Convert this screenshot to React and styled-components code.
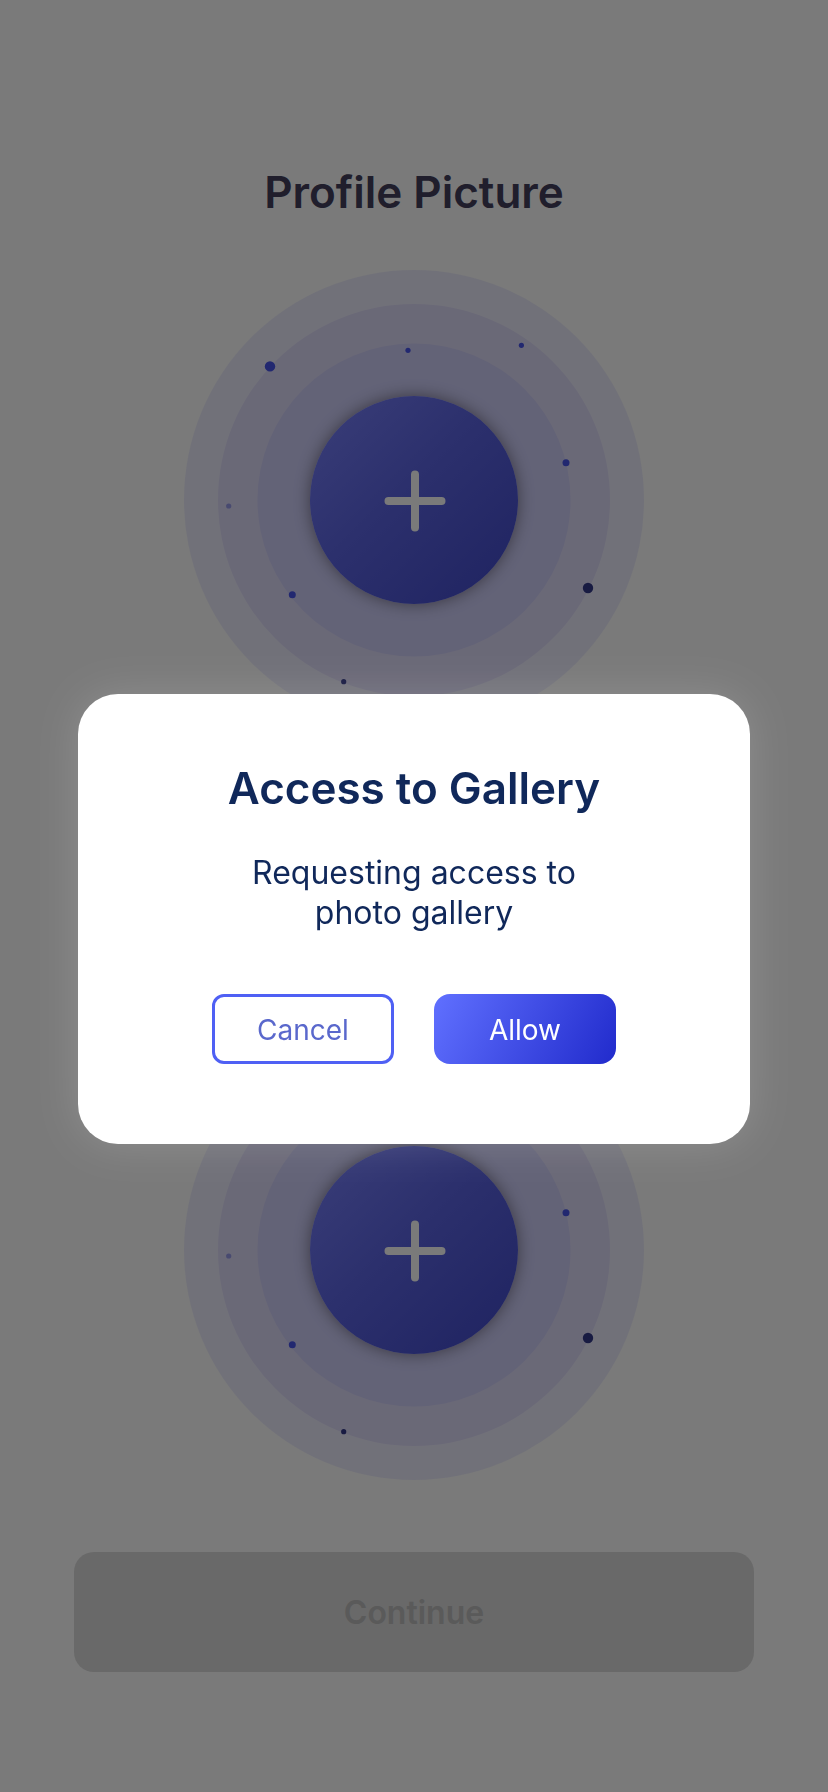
import React from "react";
import styled, { createGlobalStyle } from "styled-components";

const GlobalStyle = createGlobalStyle`
  *, *::before, *::after { box-sizing: border-box; }
  body {
    margin: 0;
    background: #f4f4f4;
    font-family: Inter, "Liberation Sans", sans-serif;
  }
  h1, h2, p { margin: 0; }
  button { font-family: inherit; cursor: pointer; }
`;

const Page = styled.main`
  display: flex;
  flex-direction: column;
  align-items: center;
  min-height: 100vh;
  padding: 168px 74px 120px;
`;

const PageTitle = styled.h1`
  margin-bottom: 54px;
  color: #403c58;
  font-size: 44px;
  font-weight: 600;
  line-height: 48px;
  text-align: center;
`;

const PickerList = styled.div`
  display: grid;
  gap: 290px;
  margin-bottom: 72px;
`;

const Picker = styled.div`
  display: grid;
  place-items: center;

  > * { grid-area: 1 / 1; }
`;

const Orbits = styled.svg`
  display: block;
  width: 460px;
  height: 460px;
`;

const AddButton = styled.button`
  width: 208px;
  height: 208px;
  padding: 0;
  border: 0;
  border-radius: 50%;
  background: linear-gradient(135deg, #747cf2 0%, #5860da 45%, #3e46c2 100%);
  box-shadow: 0 0 16px rgba(10, 0, 0, 0.45);
`;

const PlusIcon = styled.svg`
  display: block;
  width: 208px;
  height: 208px;
`;

const ContinueButton = styled.button`
  width: 100%;
  height: 120px;
  border: 0;
  border-radius: 20px;
  background: #d2d2d2;
  color: #b4b4b4;
  font-size: 32px;
  font-weight: 600;
`;

const Overlay = styled.div`
  position: fixed;
  inset: 0;
  display: flex;
  align-items: center;
  justify-content: center;
  padding: 46px 78px 0;
  background: rgba(0, 0, 0, 0.5);
`;

const Dialog = styled.section`
  display: flex;
  flex-direction: column;
  align-items: center;
  width: 100%;
  padding: 70px 40px 80px;
  border-radius: 40px;
  background: #fff;
  box-shadow: 0 0 40px rgba(255, 255, 255, 0.16);
  color: #10285a;
  text-align: center;
`;

const DialogTitle = styled.h2`
  margin-bottom: 41px;
  font-size: 44px;
  font-weight: 600;
  line-height: 48px;
`;

const DialogText = styled.p`
  max-width: 360px;
  margin-bottom: 61px;
  font-size: 32px;
  font-weight: 400;
  line-height: 40px;
`;

const Actions = styled.div`
  display: flex;
  gap: 40px;
`;

const ActionButton = styled.button`
  width: 182px;
  height: 70px;
  padding: 2px 0 0;
  border: ${({ $primary }) => ($primary ? "0" : "3px solid #4f60f4")};
  border-radius: ${({ $primary }) => ($primary ? "16px" : "12px")};
  background: ${({ $primary }) =>
    $primary ? "linear-gradient(117deg, #6070ff 0%, #212bcc 100%)" : "#fff"};
  color: ${({ $primary }) => ($primary ? "#fff" : "#5a68cc")};
  font-size: 28px;
  font-weight: 400;
`;

const rings = [
  { r: 230, fill: "#e3e3f3" },
  { r: 196, fill: "#d5d2ef" },
  { r: 156.5, fill: "#c6c6ef" },
];

const dots = [
  { x: 86, y: 96.4, r: 5.2, fill: "#4450e0" },
  { x: 224, y: 80.3, r: 2.6, fill: "#4450e0" },
  { x: 337.4, y: 75.3, r: 2.6, fill: "#4450e0" },
  { x: 382, y: 192.7, r: 3.5, fill: "#4450e0" },
  { x: 44.7, y: 236, r: 2.6, fill: "#9094e0" },
  { x: 108.3, y: 324.7, r: 3.5, fill: "#4450e0" },
  { x: 404, y: 318, r: 5.2, fill: "#303684" },
  { x: 159.7, y: 411.7, r: 2.6, fill: "#303684" },
];

function PhotoPicker({ label }) {
  return (
    <Picker>
      <Orbits viewBox="0 0 460 460" aria-hidden="true">
        {rings.map((ring) => (
          <circle key={ring.r} cx="230" cy="230" r={ring.r} fill={ring.fill} />
        ))}
        {dots.map((dot) => (
          <circle key={`${dot.x}-${dot.y}`} cx={dot.x} cy={dot.y} r={dot.r} fill={dot.fill} />
        ))}
      </Orbits>
      <AddButton type="button" aria-label={label}>
        <PlusIcon viewBox="0 0 208 208" aria-hidden="true">
          <path
            d="M105 78.5V131.5M78.5 105H131.5"
            fill="none"
            stroke="#f4f4f4"
            strokeWidth="8"
            strokeLinecap="round"
          />
        </PlusIcon>
      </AddButton>
    </Picker>
  );
}

export default function App() {
  return (
    <>
      <GlobalStyle />
      <Page>
        <PageTitle>Profile Picture</PageTitle>
        <PickerList>
          <PhotoPicker label="Add first picture" />
          <PhotoPicker label="Add second picture" />
        </PickerList>
        <ContinueButton type="button">Continue</ContinueButton>
      </Page>
      <Overlay>
        <Dialog
          role="dialog"
          aria-modal="true"
          aria-labelledby="gallery-title"
          aria-describedby="gallery-text"
        >
          <DialogTitle id="gallery-title">Access to Gallery</DialogTitle>
          <DialogText id="gallery-text">Requesting access to photo gallery</DialogText>
          <Actions>
            <ActionButton type="button">Cancel</ActionButton>
            <ActionButton type="button" $primary>
              Allow
            </ActionButton>
          </Actions>
        </Dialog>
      </Overlay>
    </>
  );
}
